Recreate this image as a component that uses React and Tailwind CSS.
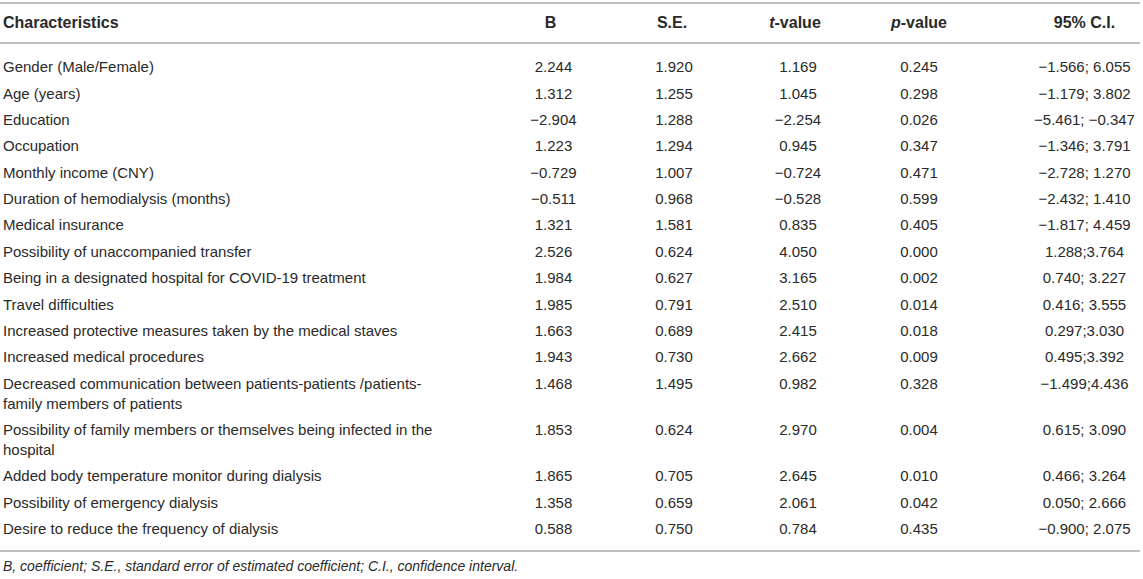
import React from "react";

const rows = [
  [["Gender (Male/Female)"], "2.244", "1.920", "1.169", "0.245", "−1.566; 6.055"],
  [["Age (years)"], "1.312", "1.255", "1.045", "0.298", "−1.179; 3.802"],
  [["Education"], "−2.904", "1.288", "−2.254", "0.026", "−5.461; −0.347"],
  [["Occupation"], "1.223", "1.294", "0.945", "0.347", "−1.346; 3.791"],
  [["Monthly income (CNY)"], "−0.729", "1.007", "−0.724", "0.471", "−2.728; 1.270"],
  [["Duration of hemodialysis (months)"], "−0.511", "0.968", "−0.528", "0.599", "−2.432; 1.410"],
  [["Medical insurance"], "1.321", "1.581", "0.835", "0.405", "−1.817; 4.459"],
  [["Possibility of unaccompanied transfer"], "2.526", "0.624", "4.050", "0.000", "1.288;3.764"],
  [["Being in a designated hospital for COVID-19 treatment"], "1.984", "0.627", "3.165", "0.002", "0.740; 3.227"],
  [["Travel difficulties"], "1.985", "0.791", "2.510", "0.014", "0.416; 3.555"],
  [["Increased protective measures taken by the medical staves"], "1.663", "0.689", "2.415", "0.018", "0.297;3.030"],
  [["Increased medical procedures"], "1.943", "0.730", "2.662", "0.009", "0.495;3.392"],
  [["Decreased communication between patients-patients /patients-", "family members of patients"], "1.468", "1.495", "0.982", "0.328", "−1.499;4.436"],
  [["Possibility of family members or themselves being infected in the", "hospital"], "1.853", "0.624", "2.970", "0.004", "0.615; 3.090"],
  [["Added body temperature monitor during dialysis"], "1.865", "0.705", "2.645", "0.010", "0.466; 3.264"],
  [["Possibility of emergency dialysis"], "1.358", "0.659", "2.061", "0.042", "0.050; 2.666"],
  [["Desire to reduce the frequency of dialysis"], "0.588", "0.750", "0.784", "0.435", "−0.900; 2.075"],
];

const grid = "grid grid-cols-[490px_121px_122px_124px_124px_159px]";

export default function App() {
  return (
    <div
      className="w-[1143px] h-[579px] bg-white text-[#2a2a2a] text-[15px] leading-[20px] overflow-hidden"
      style={{ fontFamily: '"Liberation Sans", Arial, Helvetica, sans-serif' }}
    >
      <div className="w-[1140px] mt-[2px]">
        <div className={`${grid} h-[42px] items-center border-y-2 border-[#c0c0c0] font-bold text-[16px]`}>
          <div className="pl-[3px]">Characteristics</div>
          <div className="text-center">B</div>
          <div className="text-center">S.E.</div>
          <div className="text-center">
            <span className="italic">t</span>-value
          </div>
          <div className="text-center">
            <span className="italic">p</span>-value
          </div>
          <div className="text-center pl-[48px]">95% C.I.</div>
        </div>
        <div className="pt-[10px] pb-[8px] border-b-2 border-[#c0c0c0]">
          {rows.map((r, i) => (
            <div key={i} className={`${grid} py-[3.2px] items-start`}>
              <div className="pl-[3px]">
                {r[0].map((l, j) => (
                  <div key={j}>{l}</div>
                ))}
              </div>
              <div className="text-center pl-[6px]">{r[1]}</div>
              <div className="text-center pl-[4px]">{r[2]}</div>
              <div className="text-center pl-[6px]">{r[3]}</div>
              <div className="text-center pl-[0px]">{r[4]}</div>
              <div className="text-center pl-[48px]">{r[5]}</div>
            </div>
          ))}
        </div>
        <div className="pt-[4px] pl-[3px] italic text-[14px]">
          B, coefficient; S.E., standard error of estimated coefficient; C.I., confidence interval.
        </div>
      </div>
    </div>
  );
}
